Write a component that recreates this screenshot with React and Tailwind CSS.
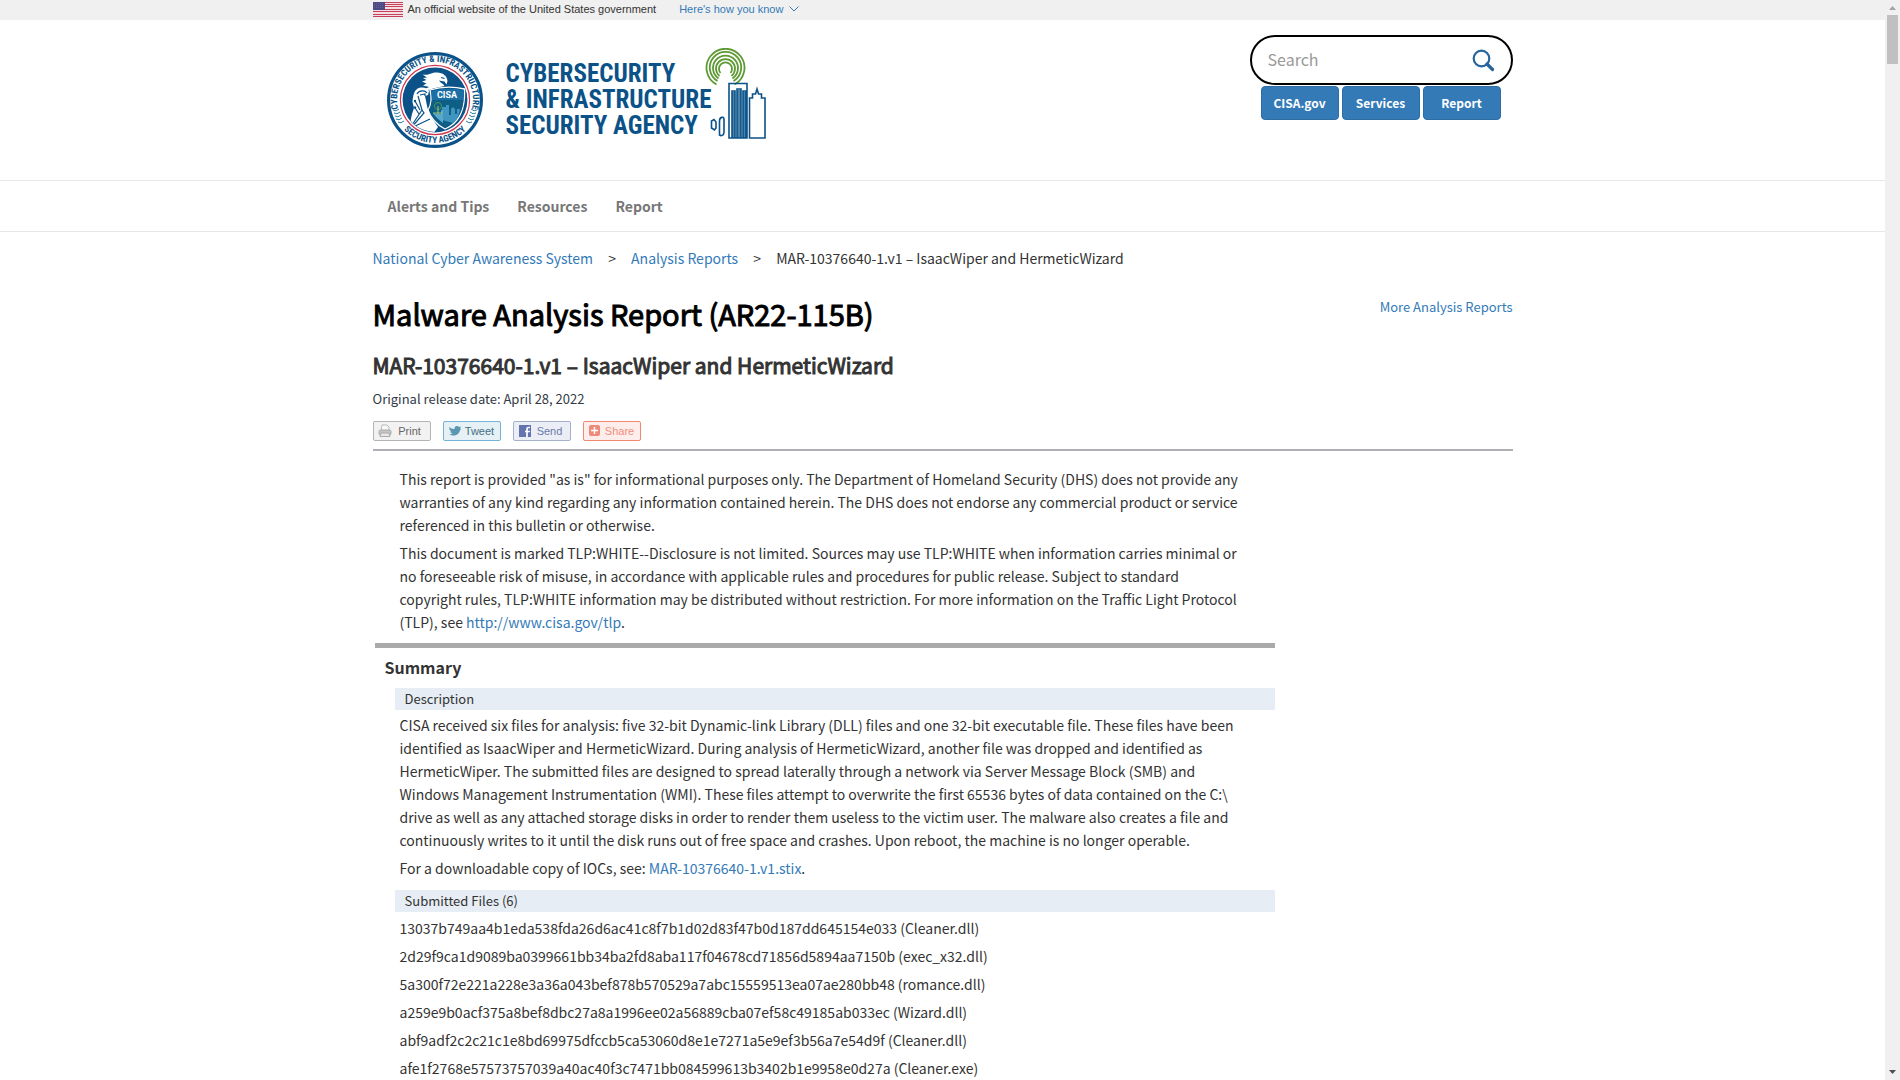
import { useState } from "react";

const link = "text-[#337ab7] hover:underline";

const files = [
  "13037b749aa4b1eda538fda26d6ac41c8f7b1d02d83f47b0d187dd645154e033 (Cleaner.dll)",
  "2d29f9ca1d9089ba0399661bb34ba2fd8aba117f04678cd71856d5894aa7150b (exec_x32.dll)",
  "5a300f72e221a228e3a36a043bef878b570529a7abc15559513ea07ae280bb48 (romance.dll)",
  "a259e9b0acf375a8bef8dbc27a8a1996ee02a56889cba07ef58c49185ab033ec (Wizard.dll)",
  "abf9adf2c2c21c1e8bd69975dfccb5ca53060d8e1e7271a5e9ef3b56a7e54d9f (Cleaner.dll)",
  "afe1f2768e57573757039a40ac40f3c7471bb084599613b3402b1e9958e0d27a (Cleaner.exe)",
];

function Flag() {
  return (
    <svg width="30" height="15" viewBox="0 0 30 15" aria-hidden="true">
      <rect width="30" height="15" fill="#f3dfe2" />
      {[0, 2, 4, 7, 9, 12, 14].map((y) => (
        <rect key={y} y={y} width="30" height="1" fill="#c8415a" />
      ))}
      <rect width="12" height="8" fill="#4b4a84" />
      {[1, 3, 5].map((y) => (
        <path key={y} d={`M1 ${y + 0.5}H11`} stroke="#65648f" strokeDasharray="1 1" />
      ))}
    </svg>
  );
}

function Seal() {
  return (
    <svg width="96" height="96" viewBox="0 0 96 96" role="img" aria-label="CISA seal">
      <defs>
        <path id="sealTop" d="M12 60 A38 38 0 1 1 84 60" />
        <path id="sealBottom" d="M5 54 A43.500 43.500 0 0 0 91 54" />
        <clipPath id="sealDisc"><circle cx="48" cy="48" r="32" /></clipPath>
      </defs>
      <circle cx="48" cy="48" r="46.4" fill="#fff" stroke="#0a5288" strokeWidth="3.2" />
      <circle cx="48" cy="48" r="34.6" fill="#fff" stroke="#cf3550" strokeWidth="1.2" />
      <circle cx="48" cy="48" r="32.4" fill="#0a5288" />
      <g fill="#0a5288" fontFamily="'Roboto Condensed', 'Liberation Sans Narrow', sans-serif" fontWeight="700" fontSize="9">
        <text textAnchor="middle"><textPath href="#sealTop" startOffset="50%">CYBERSECURITY &amp; INFRASTRUCTURE</textPath></text>
        <text textAnchor="middle"><textPath href="#sealBottom" startOffset="50%">SECURITY AGENCY</textPath></text>
      </g>
      <g fill="none" stroke="#2d82ac" strokeWidth="1">
        <path d="M6 58q3 2 6-1M7 61q3 2 6-1M8 64q3 2 6-1M9 67q3 2 6-1M11 70q3 2 6-1" />
        <path d="M90 58q-3 2-6-1M89 61q-3 2-6-1M88 64q-3 2-6-1M87 67q-3 2-6-1M85 70q-3 2-6-1" />
      </g>
      <g clipPath="url(#sealDisc)">
        <path d="M35.500 22.500C42 24 43 20.500 50 20.500C56 20.500 60 24 60.500 29L59.500 32.500L57.500 29.500L52 28.500C53 31 56.500 31.500 57.500 34L46 36.500L42 38L38 37L42 35L36 33.500L39.500 31.500L35 29.500L39.500 28L36 26L40 25.500Z" fill="#fff" />
        <path d="M54 25.500L57.500 26.500" stroke="#0a5288" strokeWidth="1.200" />
        <path d="M30 37C34 34.500 41 35.500 42 39L41 43L38 44L40.500 56L44 65L51 75L46 82L22 76L25 62L27 56L25.500 50C26 44 27 39 30 37Z" fill="#fff" />
        <g fill="none" stroke="#0a5288" strokeWidth="1.2">
          <path d="M30 42C32 38 38 38 40 41M33 43L38 42L38 44M31 44L35 58L25 73M28 49L33 58M27.500 55L32 62M35 58L37 61L24 76L43 67" />
        </g>
        <circle cx="28" cy="49" r="1.200" fill="#0a5288" /><circle cx="28" cy="55.500" r="1.200" fill="#0a5288" />
      </g>
      <path d="M43 38Q60 33 77.500 37Q79 68 58 77Q45 70 41 58Q46 50 43 38Z" fill="#0a5288" stroke="#fff" strokeWidth="1.3" />
      <path d="M44 39Q60 35 76.500 38V48H45Z" fill="#1c6fa5" />
      <path d="M45 48H76.500Q75 68 58 75.500Q46 68 43 58Z" fill="#0e5f86" />
      <path d="M55 68V55H59V53H62V63H64V57L66 55L68 57V62H70V57H73Q72 66 66 71Z" fill="#3f96c0" />
      <path d="M49 62H54V58H56V71Q49 66 46 61Z" fill="#5ba6cb" />
      <circle cx="51" cy="54" r="3.500" fill="none" stroke="#4d9150" strokeWidth="1" />
      <path d="M51 54v8M46 61h9" stroke="#9ccb7e" />
      <text x="60" y="45.5" textAnchor="middle" fill="#fff" fontFamily="Roboto, sans-serif" fontWeight="700" fontSize="9">CISA</text>
    </svg>
  );
}

function Skyline() {
  return (
    <svg width="62" height="92" viewBox="0 0 62 92" aria-hidden="true">
      <g fill="none" stroke="#5e9a34" strokeWidth="1.8">
        <path d="M11.500 36.500A19 19 0 1 1 29.500 36.500" />
        <path d="M12.500 33A15.700 15.700 0 1 1 28.500 33" />
        <path d="M13.500 30.500A12.500 12.500 0 1 1 27.500 30.500" />
        <path d="M14.500 28A9.500 9.500 0 1 1 26.500 28" />
        <path d="M15.500 25A6.500 6.500 0 1 1 25.500 25" />
      </g>
      <path d="M27 44h3v46h-3zM32 42h4v48h-4zM38 44h3v46h-3z" fill="#4a84ad" />
      <g fill="none" stroke="#0a5288" strokeWidth="1.6">
        <path d="M24 90V35.500H42V90ZM27 90V43h3v47M32 90V41h4v49M38 90V43h3v47" />
        <path d="M44.500 90V50H47.500V46H50.500L52 41L53.500 46H56.500V50H60V90Z" />
        <path d="M14.500 87V73C14.500 69 19 68 19 71V84C19 88 16 88 14.500 87Z" />
        <path d="M6.500 80V73L9 71.500L11 74V80L9.500 82Z" />
      </g>
    </svg>
  );
}

function Logo() {
  return (
    <a href="#home" className="flex">
      <span className="mt-8 ml-3.5"><Seal /></span>
      <span className="mt-[41px] ml-[23px] block font-['Liberation_Sans_Narrow','Roboto_Condensed',sans-serif] text-[25px] leading-[26px] font-bold whitespace-nowrap text-[#0a5288]">
        CYBERSECURITY<br />&amp; INFRASTRUCTURE<br />SECURITY AGENCY
      </span>
      <span className="mt-7 -ml-1.5"><Skyline /></span>
    </a>
  );
}

function SearchIcon() {
  return (
    <svg width="24" height="24" viewBox="0 0 24 24" fill="none" stroke="#27649b" aria-hidden="true">
      <circle cx="10.500" cy="10.500" r="7.800" strokeWidth="2.200" />
      <path d="M16 16L21.500 21.500" strokeWidth="3.200" strokeLinecap="round" />
    </svg>
  );
}

const icons = {
  Print: (
    <svg width="14" height="14" viewBox="0 0 14 14" aria-hidden="true">
      <path d="M4 1H9L11 3V7H3Z" fill="#fafafa" stroke="#bbb" />
      <rect x="1" y="6" width="12" height="5" rx="1.500" fill="#c4c4c4" stroke="#ababab" />
      <path d="M3 9H11L12 12.500H2Z" fill="#e8e8e8" stroke="#ababab" />
    </svg>
  ),
  Tweet: (
    <svg width="14" height="14" viewBox="0 0 14 14" aria-hidden="true">
      <path d="M1 3Q4 5.500 6.500 5C6 2 9.500 1 11 3L13 2.500L12 4.500L13.500 5L12 6C11.500 11 6 13 1 10.500Q3 10.500 4.500 9Q2.500 9 2 7.500H3.500Q1 6 1 3Z" fill="#5c97b1" />
    </svg>
  ),
  Send: (
    <svg width="14" height="14" viewBox="0 0 14 14" aria-hidden="true">
      <rect x="1" y="1" width="12" height="12" fill="#6474af" />
      <path d="M12 3.500H10.500Q9 3.500 9 5V13M7 7.500H12" fill="none" stroke="#fff" strokeWidth="1.700" />
    </svg>
  ),
  Share: (
    <svg width="14" height="14" viewBox="0 0 14 14" aria-hidden="true">
      <rect x="1" y="1" width="11" height="11" rx="2" fill="#ee8a79" />
      <path d="M6.500 3V10M3 6.500H10" stroke="#fff" strokeWidth="1.500" />
    </svg>
  ),
};

function Social({ name, tone }) {
  return (
    <button type="button" className={`flex h-5 w-[58px] items-center rounded-[2px] border pr-0.5 pl-1 font-['Liberation_Sans',Arial,sans-serif] text-[11px] leading-4 ${tone}`}>
      {icons[name]}
      <span className="flex-1 text-center">{name}</span>
    </button>
  );
}

function Bar({ children }) {
  return <h3 className="ml-5 bg-[#e6edf4] pl-2.5 text-[13px] leading-[22px]">{children}</h3>;
}

export default function App() {
  const [query, setQuery] = useState("");
  return (
    <div className="flex h-screen overflow-hidden bg-white font-['Noto_Sans_CJK_SC',sans-serif] text-[14px] leading-[23px] text-[#333]">
      <div className="min-w-0 flex-1 overflow-hidden">
        <div className="bg-[#f0f0f0]">
          <div className="mx-auto flex h-5 max-w-[1140px] items-center pb-0.5 font-['Liberation_Sans',Arial,sans-serif] text-[11px] leading-4">
            <Flag />
            <span className="ml-[5px]">An official website of the United States government</span>
            <button type="button" className="ml-[23px] flex items-center gap-1.5 text-[#337ab7]">
              Here's how you know
              <svg width="10" height="6" viewBox="0 0 10 6" fill="none" stroke="#337ab7" aria-hidden="true"><path d="M.5.5L5 5L9.500.5" /></svg>
            </button>
          </div>
        </div>

        <header className="mx-auto flex h-40 max-w-[1140px] justify-between">
          <Logo />
          <div className="mt-[15px] w-[263px]">
            <form className="flex h-[50px] items-center rounded-full border-2 border-black px-4" onSubmit={(e) => e.preventDefault()}>
              <input type="search" aria-label="Search" placeholder="Search" value={query} onChange={(e) => setQuery(e.target.value)} className="min-w-0 flex-1 pb-0.5 text-[16px] leading-6 outline-none placeholder:text-[#999]" />
              <button type="submit" aria-label="Submit search"><SearchIcon /></button>
            </form>
            <nav aria-label="Quick links" className="mt-px ml-[11px] flex gap-[3px]">
              {["CISA.gov", "Services", "Report"].map((t) => (
                <a key={t} href={`#${t}`} className="w-[78px] rounded border border-[#2e6da4] bg-[#337ab7] text-center text-[12px] leading-8 font-bold text-white">{t}</a>
              ))}
            </nav>
          </div>
        </header>

        <nav aria-label="Main" className="border-y border-[#e7e7e7]">
          <div className="mx-auto flex max-w-[1140px] gap-7 px-[15px] py-[13px] text-[14px] leading-6 font-bold text-[#777]">
            {["Alerts and Tips", "Resources", "Report"].map((t) => <a key={t} href={`#${t}`}>{t}</a>)}
          </div>
        </nav>

        <main className="mx-auto max-w-[1140px]">
          <nav aria-label="Breadcrumb" className="mt-[15px]">
            <ol className="flex">
              <li><a href="#ncas" className={link}>National Cyber Awareness System</a></li>
              <li aria-hidden="true" className="w-[38px] text-center">&gt;</li>
              <li><a href="#reports" className={link}>Analysis Reports</a></li>
              <li aria-hidden="true" className="w-[38px] text-center">&gt;</li>
              <li>MAR-10376640-1.v1 – IsaacWiper and HermeticWizard</li>
            </ol>
          </nav>

          <div className="mt-[23px] flex justify-between">
            <h1 className="text-[29px] leading-10 text-black [-webkit-text-stroke:1px]">Malware Analysis Report (AR22-115B)</h1>
            <a href="#more" className={`${link} text-[13px] leading-7`}>More Analysis Reports</a>
          </div>
          <h2 className="mt-4 text-[21px] leading-8 [-webkit-text-stroke:1px]">MAR-10376640-1.v1 – IsaacWiper and HermeticWizard</h2>
          <p className="mt-2 text-[13px] leading-5 text-[#323a45]">Original release date: April 28, 2022</p>
          <div className="mt-3 flex gap-3 border-b-2 border-[#aeb0b5] pb-2">
            <Social name="Print" tone="border-[#b4b4b4] bg-[#f2f2f2] text-[#666]" />
            <Social name="Tweet" tone="border-[#71b4d5] bg-[#e6f1f6] text-[#446f83]" />
            <Social name="Send" tone="border-[#a5b0cf] bg-[#eceef5] text-[#6b7aab]" />
            <Social name="Share" tone="border-[#ef8773] bg-[#fdeeeb] text-[#f08d7b]" />
          </div>

          <article className="ml-0.5 max-w-[900px]">
            <div className="mt-[17px] ml-[25px] space-y-[5px] pr-[34px]">
              <p>This report is provided "as is" for informational purposes only. The Department of Homeland Security (DHS) does not provide any warranties of any kind regarding any information contained herein. The DHS does not endorse any commercial product or service referenced in this bulletin or otherwise.</p>
              <p>This document is marked TLP:WHITE--Disclosure is not limited. Sources may use TLP:WHITE when information carries minimal or no foreseeable risk of misuse, in accordance with applicable rules and procedures for public release. Subject to standard copyright rules, TLP:WHITE information may be distributed without restriction. For more information on the Traffic Light Protocol (TLP), see <a href="#tlp" className={link}>http://www.cisa.gov/tlp</a>.</p>
            </div>
            <h2 className="mt-[9px] border-t-[5px] border-[#aaa] pt-[5px] pl-2.5 text-[16px] leading-7 font-bold">Summary</h2>
            <div className="mt-[7px]"><Bar>Description</Bar></div>
            <div className="mt-1 ml-[25px] space-y-[5px] pr-[34px]">
              <p>CISA received six files for analysis: five 32-bit Dynamic-link Library (DLL) files and one 32-bit executable file. These files have been identified as IsaacWiper and HermeticWizard. During analysis of HermeticWizard, another file was dropped and identified as HermeticWiper. The submitted files are designed to spread laterally through a network via Server Message Block (SMB) and Windows Management Instrumentation (WMI). These files attempt to overwrite the first 65536 bytes of data contained on the C:\ drive as well as any attached storage disks in order to render them useless to the victim user. The malware also creates a file and continuously writes to it until the disk runs out of free space and crashes. Upon reboot, the machine is no longer operable.</p>
              <p>For a downloadable copy of IOCs, see: <a href="#stix" className={link}>MAR-10376640-1.v1.stix</a>.</p>
            </div>
            <div className="mt-2.5"><Bar>Submitted Files (6)</Bar></div>
            <ul className="mt-[5px] ml-[25px] space-y-[5px]">
              {files.map((f) => <li key={f}>{f}</li>)}
            </ul>
          </article>
        </main>
      </div>

      <div aria-hidden="true" className="flex w-[15px] flex-col items-center bg-[#f0f0f0]">
        <svg width="15" height="15" viewBox="0 0 15 15"><path d="M4 10L7.500 6L11 10Z" fill="#a3a3a3" /></svg>
        <div className="h-[49px] w-[11px] bg-[#c0c0c0]" />
        <svg className="mt-auto" width="15" height="15" viewBox="0 0 15 15"><path d="M4 5L7.500 9L11 5Z" fill="#505050" /></svg>
      </div>
    </div>
  );
}
